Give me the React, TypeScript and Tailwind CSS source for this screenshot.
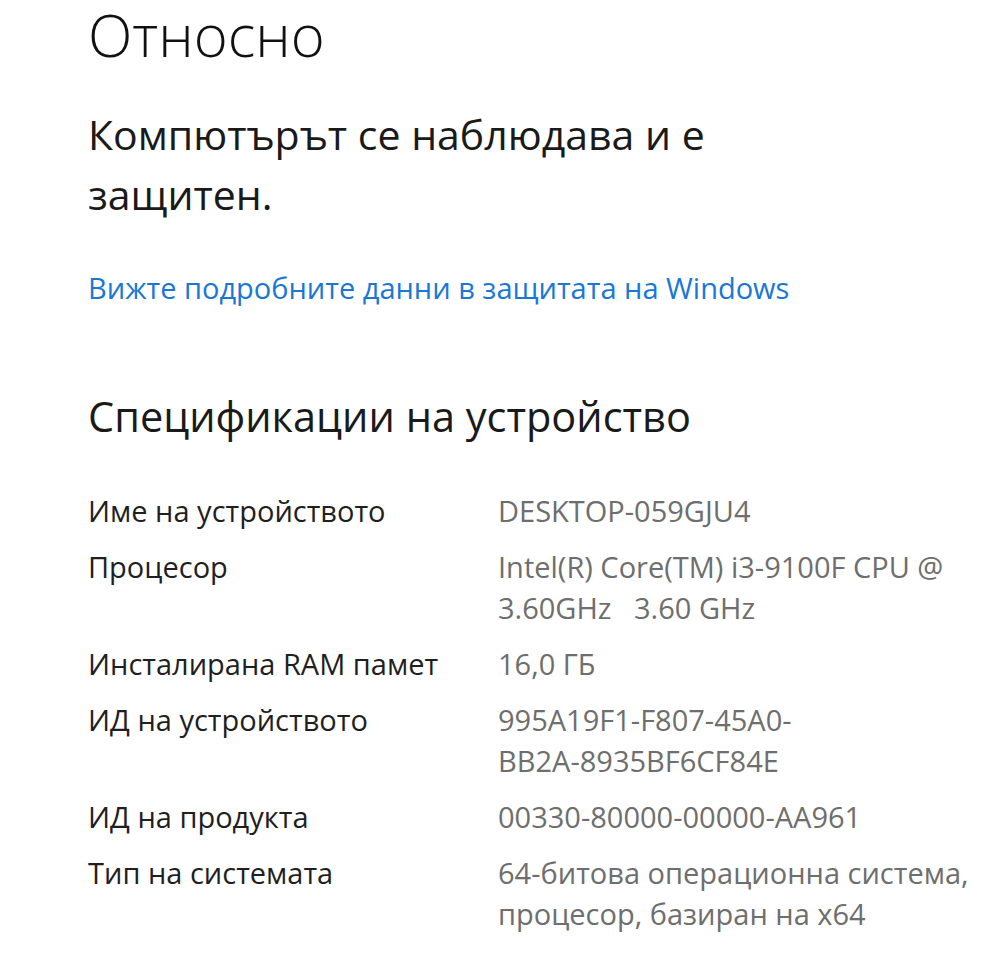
import React from "react";

const rows: { label: string; value: React.ReactNode }[] = [
  { label: "Име на устройството", value: "DESKTOP-059GJU4" },
  {
    label: "Процесор",
    value: (
      <>
        Intel(R) Core(TM) i3-9100F CPU @
        <br />
        3.60GHz&nbsp;&nbsp;&nbsp;3.60 GHz
      </>
    ),
  },
  { label: "Инсталирана RAM памет", value: "16,0 ГБ" },
  {
    label: "ИД на устройството",
    value: (
      <>
        995A19F1-F807-45A0-
        <br />
        BB2A-8935BF6CF84E
      </>
    ),
  },
  { label: "ИД на продукта", value: "00330-80000-00000-AA961" },
  {
    label: "Тип на системата",
    value: (
      <>
        64-битова операционна система,
        <br />
        процесор, базиран на x64
      </>
    ),
  },
];

export default function App() {
  return (
    <div
      className="w-[1000px] h-[971px] bg-white pl-[88px] overflow-hidden"
      style={{ fontFamily: '"Open Sans", "Noto Sans", sans-serif' }}
    >
      <h1 className="text-[58px] leading-[70px] font-light text-[#111111] m-0 whitespace-nowrap">
        Относно
      </h1>
      <p className="mt-[34px] text-[41px] leading-[60px] text-[#1a1a1a] whitespace-nowrap">
        Компютърът се наблюдава и е
        <br />
        защитен.
      </p>
      <a className="block mt-[44px] text-[29px] leading-[40px] text-[#1a78d4] whitespace-nowrap">
        Вижте подробните данни в защитата на Windows
      </a>
      <h2 className="mt-[78px] text-[41.5px] leading-[60px] text-[#1a1a1a] whitespace-nowrap">
        Спецификации на устройство
      </h2>
      <div className="mt-[44px] grid grid-cols-[410px_1fr] gap-y-[15px] text-[29px] leading-[41px] whitespace-nowrap">
        {rows.map((r) => (
          <React.Fragment key={r.label}>
            <div className="text-[#1f1f1f]">{r.label}</div>
            <div className="text-[#6e6e6e]">{r.value}</div>
          </React.Fragment>
        ))}
      </div>
    </div>
  );
}
